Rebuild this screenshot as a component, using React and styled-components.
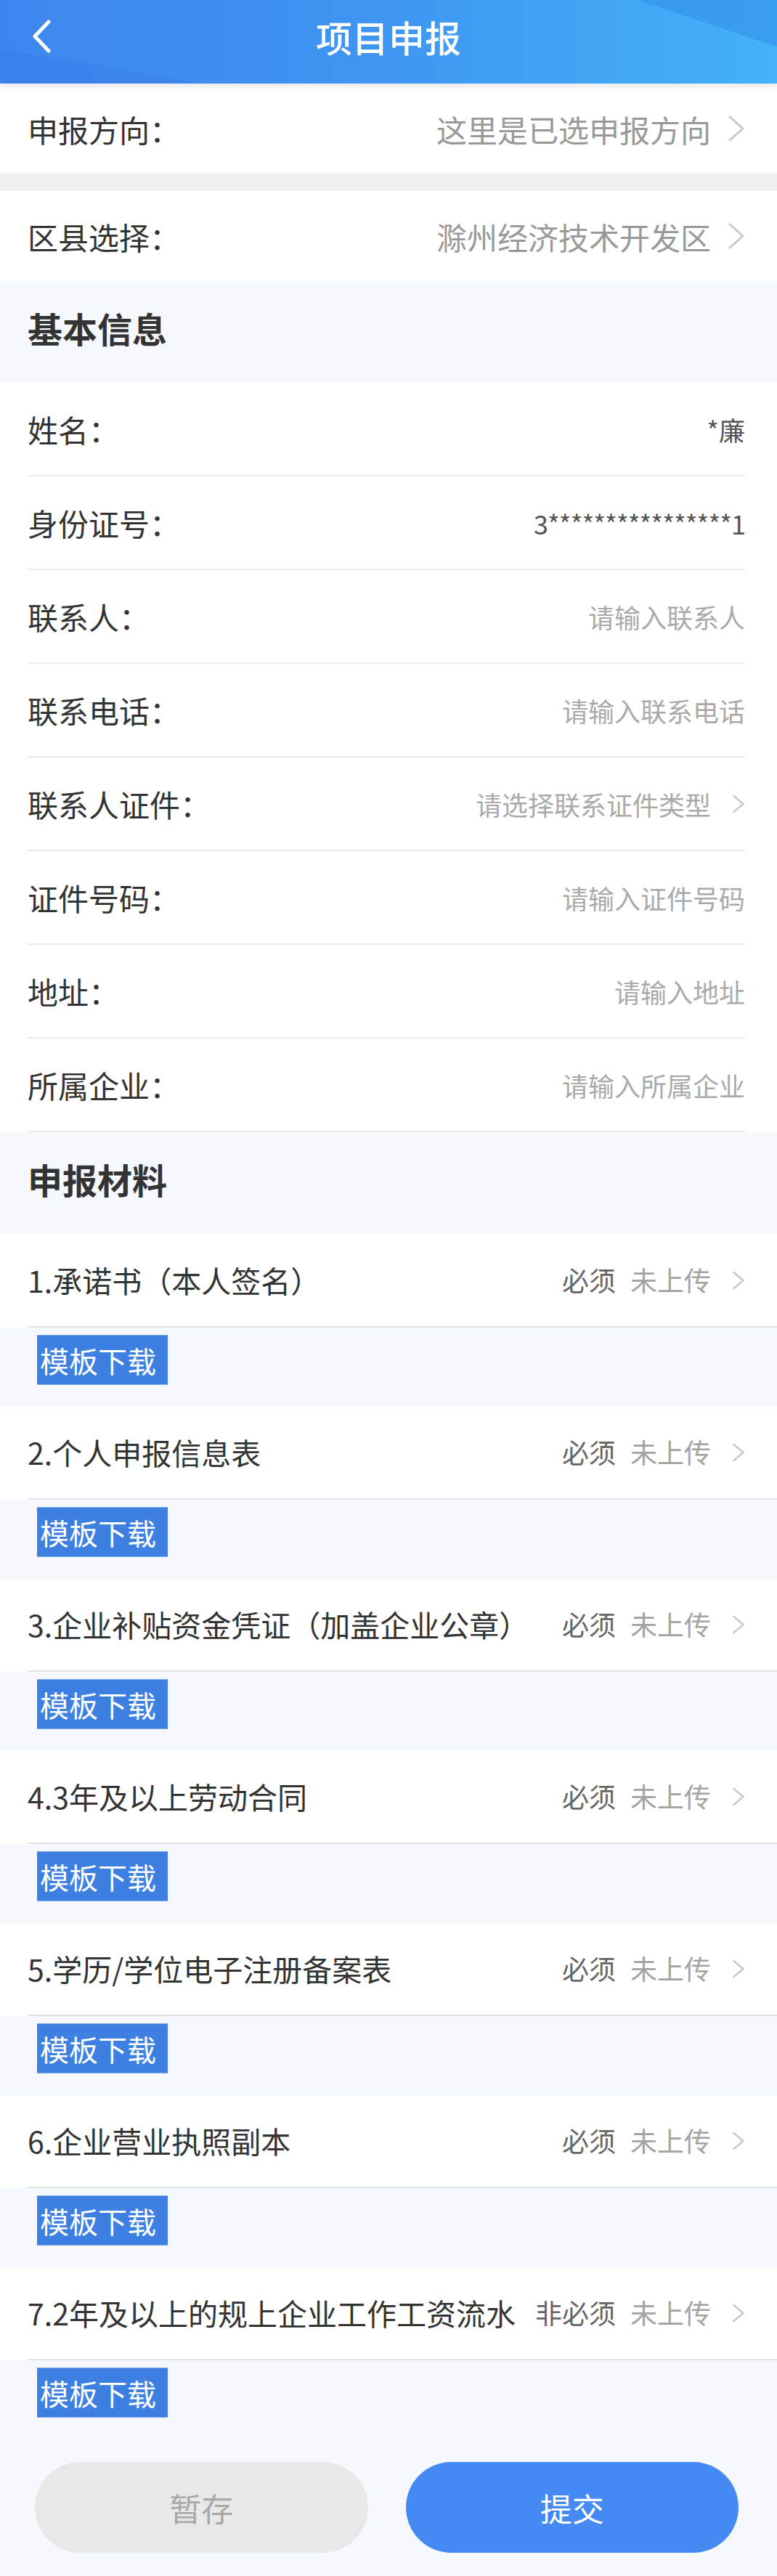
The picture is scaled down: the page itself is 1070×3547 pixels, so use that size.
import styled, { createGlobalStyle } from "styled-components";

const GlobalStyle = createGlobalStyle`
  body {
    margin: 0;
    background: #f5f8fc;
    font-family: "Noto Sans CJK SC", "Noto Sans", sans-serif;
  }
`;

const Page = styled.div`
  width: 1070px;
  min-height: 3547px;
  background: #f5f8fc;
`;

const Header = styled.header`
  position: relative;
  z-index: 1;
  height: 115px;
  background:
    linear-gradient(18.6deg, rgba(0, 0, 0, 0) 86.4%, rgba(46, 136, 230, 0.45) 86.4%),
    linear-gradient(189.7deg, rgba(0, 0, 0, 0) 84%, rgba(48, 108, 222, 0.2) 84%),
    linear-gradient(90deg, #3e86ee 0%, #3f94f1 45%, #43b2f8 100%);
  box-shadow: 0 4px 10px rgba(0, 0, 0, 0.1);
`;

const NavBar = styled.div`
  height: 100px;
  display: grid;
  grid-template-columns: 1fr auto 1fr;
  align-items: center;
  padding: 0 43px;
`;

const BackButton = styled.div`
  display: flex;
  align-items: center;
`;

const Title = styled.h1`
  margin: 0;
  font-size: 50px;
  font-weight: 500;
  color: #fff;
  line-height: 1;
`;

const SelectRow = styled.div`
  height: 124px;
  background: #fff;
  display: flex;
  align-items: center;
  padding: 0 44px 0 38px;
`;

const Band = styled.div`
  height: 24px;
  background: #eeeef3;
`;

const Label = styled.span`
  flex-shrink: 0;
  font-size: 42px;
  color: #333;
  line-height: 1.5;
`;

const Value = styled.span`
  margin-left: auto;
  font-size: ${(p) => p.$size || 36}px;
  color: ${(p) => p.$color || "#aaa"};
  letter-spacing: ${(p) => p.$spacing || 0}px;
  line-height: 1.5;
  white-space: nowrap;
`;

const SectionTitle = styled.h2`
  margin: 0;
  height: ${(p) => p.$height}px;
  box-sizing: border-box;
  display: flex;
  align-items: center;
  padding: 0 0 13px 38px;
  font-size: 48px;
  font-weight: 700;
  color: #333;
`;

const InfoList = styled.div`
  background: #fff;
`;

const InfoRow = styled.div`
  height: 129px;
  box-sizing: border-box;
  margin: 0 44px 0 38px;
  border-bottom: 2px solid #ebebeb;
  display: flex;
  align-items: center;
`;

const ChevronBox = styled.svg`
  flex-shrink: 0;
  margin-left: ${(p) => p.$gap}px;
`;

const MaterialRow = styled.div`
  background: #fff;
  padding-left: 38px;
`;

const MaterialInner = styled.div`
  height: 128px;
  box-sizing: border-box;
  border-bottom: 2px solid #e3e3e6;
  display: flex;
  align-items: center;
  padding-right: 44px;
`;

const MaterialName = styled.span`
  flex: 1;
  min-width: 0;
  margin-right: 6px;
  white-space: nowrap;
  overflow: hidden;
  text-overflow: ellipsis;
  font-size: 41px;
  color: #333;
  line-height: 1.5;
`;

const Required = styled.span`
  flex-shrink: 0;
  min-width: 112px;
  text-align: right;
  white-space: nowrap;
  font-size: 37px;
  color: #666;
  line-height: 1.5;
`;

const Status = styled.span`
  flex-shrink: 0;
  margin-left: 20px;
  white-space: nowrap;
  font-size: 37px;
  color: #a3a3a3;
  line-height: 1.5;
`;

const DownloadArea = styled.div`
  height: 109px;
  box-sizing: border-box;
  padding: 10px 0 0 51px;
`;

const DownloadButton = styled.button`
  display: block;
  width: 180px;
  height: 69px;
  box-sizing: border-box;
  padding: 0 0 0 4px;
  border: none;
  border-top: 1px solid #7eaaec;
  border-bottom: 1px solid #7eaaec;
  background: #3d80e2;
  color: #fff;
  font-family: inherit;
  font-size: 40px;
  line-height: 1;
  text-align: left;
`;

const Footer = styled.div`
  display: flex;
  gap: 52px;
  padding: 31px 53px 32px 48px;
`;

const FooterButton = styled.button`
  flex: 1;
  height: 125px;
  border: none;
  border-radius: 63px;
  font-family: inherit;
  font-size: 44px;
  background: ${(p) => (p.$primary ? "#4589f3" : "#e8e8e8")};
  color: ${(p) => (p.$primary ? "#fff" : "#a8a8a8")};
`;

function Chevron({ big, gap }) {
  const w = big ? 24 : 18;
  const h = big ? 36 : 26;
  return (
    <ChevronBox $gap={gap} width={w} height={h} viewBox={`0 0 ${w} ${h}`}>
      <polyline
        points={big ? "3,2 21,18 3,34" : "2.5,2 15.5,13 2.5,24"}
        fill="none"
        stroke="#c9c9c9"
        strokeWidth={big ? 3 : 2.6}
        strokeLinecap="round"
        strokeLinejoin="round"
      />
    </ChevronBox>
  );
}

const info = [
  { label: "姓名：", value: "*廉", color: "#555" },
  { label: "身份证号：", value: "3****************1", color: "#555", spacing: -1 },
  { label: "联系人：", value: "请输入联系人" },
  { label: "联系电话：", value: "请输入联系电话" },
  { label: "联系人证件：", value: "请选择联系证件类型", arrow: true },
  { label: "证件号码：", value: "请输入证件号码" },
  { label: "地址：", value: "请输入地址" },
  { label: "所属企业：", value: "请输入所属企业" },
];

const materials = [
  { name: "1.承诺书（本人签名）", need: "必须" },
  { name: "2.个人申报信息表", need: "必须" },
  { name: "3.企业补贴资金凭证（加盖企业公章）", need: "必须" },
  { name: "4.3年及以上劳动合同", need: "必须" },
  { name: "5.学历/学位电子注册备案表", need: "必须" },
  { name: "6.企业营业执照副本", need: "必须" },
  { name: "7.2年及以上的规上企业工作工资流水", need: "非必须" },
];

export default function App() {
  return (
    <Page>
      <GlobalStyle />
      <Header>
        <NavBar>
          <BackButton>
            <svg width="28" height="46" viewBox="0 0 28 46">
              <polyline
                points="24,3 5,23 24,43"
                fill="none"
                stroke="#fff"
                strokeWidth="5"
                strokeLinecap="round"
                strokeLinejoin="round"
              />
            </svg>
          </BackButton>
          <Title>项目申报</Title>
          <span />
        </NavBar>
      </Header>

      <SelectRow>
        <Label>申报方向：</Label>
        <Value $size={42} $color="#999">这里是已选申报方向</Value>
        <Chevron big gap={23} />
      </SelectRow>
      <Band />
      <SelectRow>
        <Label>区县选择：</Label>
        <Value $size={42} $color="#999">滁州经济技术开发区</Value>
        <Chevron big gap={23} />
      </SelectRow>

      <SectionTitle $height={140}>基本信息</SectionTitle>
      <InfoList>
        {info.map((row) => (
          <InfoRow key={row.label}>
            <Label>{row.label}</Label>
            <Value $color={row.color} $spacing={row.spacing}>{row.value}</Value>
            {row.arrow && <Chevron gap={29} />}
          </InfoRow>
        ))}
      </InfoList>

      <SectionTitle $height={141}>申报材料</SectionTitle>
      {materials.map((m) => (
        <div key={m.name}>
          <MaterialRow>
            <MaterialInner>
              <MaterialName>{m.name}</MaterialName>
              <Required>{m.need}</Required>
              <Status>未上传</Status>
              <Chevron gap={29} />
            </MaterialInner>
          </MaterialRow>
          <DownloadArea>
            <DownloadButton>模板下载</DownloadButton>
          </DownloadArea>
        </div>
      ))}

      <Footer>
        <FooterButton>暂存</FooterButton>
        <FooterButton $primary>提交</FooterButton>
      </Footer>
    </Page>
  );
}
